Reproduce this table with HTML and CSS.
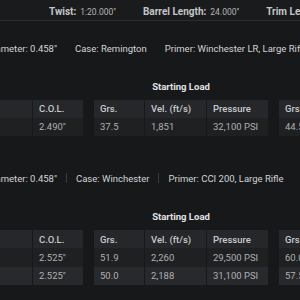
FILE: index.html
```html
<!DOCTYPE html>
<html>
<head>
<meta charset="utf-8">
<link rel="stylesheet" href="styles.css">
</head>
<body>
<div class="topbar">
  <div class="spec"><b>Twist:</b> <span>1:20.000"</span></div>
  <div class="spec"><b>Barrel Length:</b> <span>24.000"</span></div>
  <div class="spec"><b>Trim Length:</b> <span>3.290"</span></div>
</div>

<section class="load">
  <div class="info">
    <span>Diameter: 0.458"</span><i class="sep"></i>
    <span>Case: Remington</span><i class="sep"></i>
    <span>Primer: Winchester LR, Large Rifle</span>
  </div>
  <div class="groups">
    <div class="group">
      <div class="grid g-a">
        <div class="th"></div><div class="th">C.O.L.</div>
        <div class="td"></div><div class="td">2.490"</div>
      </div>
    </div>
    <div class="group">
      <div class="caption">Starting Load</div>
      <div class="grid g-b">
        <div class="th">Grs.</div><div class="th">Vel. (ft/s)</div><div class="th">Pressure</div>
        <div class="td">37.5</div><div class="td">1,851</div><div class="td">32,100 PSI</div>
      </div>
    </div>
    <div class="group">
      <div class="caption">Maximum Load</div>
      <div class="grid g-c">
        <div class="th">Grs.</div><div class="th">Vel. (ft/s)</div><div class="th">Pressure</div>
        <div class="td">44.5</div><div class="td">2,080</div><div class="td">39,500 PSI</div>
      </div>
    </div>
  </div>
</section>

<section class="load">
  <div class="info">
    <span>Diameter: 0.458"</span><i class="sep"></i>
    <span>Case: Winchester</span><i class="sep"></i>
    <span>Primer: CCI 200, Large Rifle</span>
  </div>
  <div class="groups">
    <div class="group">
      <div class="grid g-a">
        <div class="th"></div><div class="th">C.O.L.</div>
        <div class="td"></div><div class="td">2.525"</div>
        <div class="td alt"></div><div class="td alt">2.525"</div>
      </div>
    </div>
    <div class="group">
      <div class="caption">Starting Load</div>
      <div class="grid g-b">
        <div class="th">Grs.</div><div class="th">Vel. (ft/s)</div><div class="th">Pressure</div>
        <div class="td">51.9</div><div class="td">2,260</div><div class="td">29,500 PSI</div>
        <div class="td alt">50.0</div><div class="td alt">2,188</div><div class="td alt">31,100 PSI</div>
      </div>
    </div>
    <div class="group">
      <div class="caption">Maximum Load</div>
      <div class="grid g-c">
        <div class="th">Grs.</div><div class="th">Vel. (ft/s)</div><div class="th">Pressure</div>
        <div class="td">60.0</div><div class="td">2,420</div><div class="td">36,800 PSI</div>
        <div class="td alt">57.5</div><div class="td alt">2,350</div><div class="td alt">38,900 PSI</div>
      </div>
    </div>
  </div>
</section>
</body>
</html>
```

FILE: styles.css
```css
html, body {
  margin: 0;
  padding: 0;
  background: #17181a;
  width: 300px;
  height: 300px;
  overflow: hidden;
  font-family: Roboto, "Liberation Sans", sans-serif;
}

.topbar {
  display: flex;
  gap: 27px;
  align-items: center;
  height: 21px;
  box-sizing: border-box;
  padding: 0 0 1px 49px;
  border-bottom: 1px solid #2b2d30;
  background: #1a1b1d;
  white-space: nowrap;
  line-height: 1;
}
.spec b {
  font-weight: 700;
  font-size: 10px;
  color: #c4c6c8;
}
.spec span {
  font-size: 8.5px;
  color: #b4b6b8;
}

.load {
  white-space: nowrap;
}
.load + .load {
  margin-top: 15px;
}

.info {
  display: flex;
  align-items: center;
  gap: 9px;
  margin-left: -13px;
  padding-top: 21px;
  height: 12px;
  font-size: 9.5px;
  color: #d2d4d6;
}
.sep {
  width: 1px;
  height: 10px;
  background: #3a3c40;
}

.groups {
  display: flex;
  align-items: flex-end;
  gap: 11px;
  margin-top: 27px;
}
.caption {
  text-align: center;
  font-weight: 700;
  font-size: 9.5px;
  color: #e2e3e4;
  height: 12px;
  line-height: 12px;
  margin-bottom: 7px;
}
.grid {
  display: grid;
  gap: 0 1px;
}
.g-a { grid-template-columns: 32px 50px; }
.g-b { grid-template-columns: 50px 61px 61px; }
.g-c { grid-template-columns: 50px 61px 61px; }

.th, .td {
  font-size: 9.5px;
  padding: 0 6px;
  display: flex;
  align-items: center;
}
.th {
  height: 17.5px;
  background: #25272a;
  color: #c8cacc;
  font-weight: 500;
}
.td {
  height: 18.75px;
  background: #1e2022;
  color: #aeb0b2;
}
.td.alt {
  background: #27292c;
}
```
